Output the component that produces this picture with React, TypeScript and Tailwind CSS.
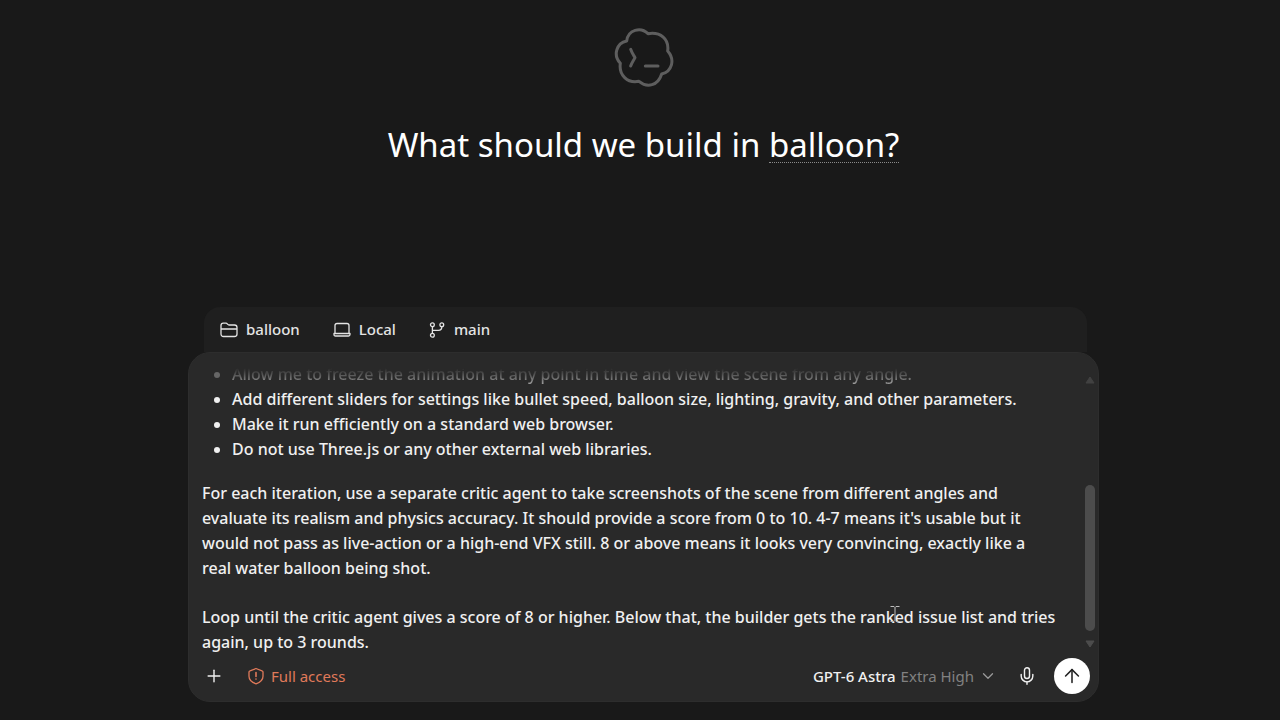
import { useState } from 'react';
import { ArrowUp, ChevronDown, Mic, Plus } from 'lucide-react';

const requirements = [
  'Add different sliders for settings like bullet speed, balloon size, lighting, gravity, and other parameters.',
  'Make it run efficiently on a standard web browser.',
  'Do not use Three.js or any other external web libraries.',
];

function Logo() {
  return (
    <svg
      viewBox="70 50 180 180"
      className="h-[60px] w-[60px] text-[#5e5e5e]"
      fill="none"
      stroke="currentColor"
      strokeWidth="9"
      strokeLinecap="round"
      strokeLinejoin="round"
      aria-hidden="true"
    >
      <path d="M108 92 C112 58 150 48 172 70 C210 64 236 86 231 122 C254 148 244 184 213 191 C202 226 170 234 145 213 C110 220 84 194 89 159 C66 134 78 98 108 92 Z" />
      <path d="M120 117 C124 129 130 136 133 142 C129 150 123 158 120 167" />
      <path d="M164 167 H202" />
    </svg>
  );
}

function IBeam() {
  return (
    <svg
      viewBox="0 0 10 18"
      className="pointer-events-none absolute left-[688px] top-0 h-[18px] w-[10px]"
      fill="none"
      stroke="#bdbdbd"
      aria-hidden="true"
    >
      <path d="M0.5 1.5 H4 L5 2.5 L6 1.5 H9.5 M5 2.5 V15.5 M0.5 16.5 H4 L5 15.5 L6 16.5 H9.5" />
    </svg>
  );
}

function ShieldAlert() {
  return (
    <svg
      viewBox="0 0 18 18"
      className="h-[18px] w-[18px]"
      fill="none"
      stroke="currentColor"
      strokeWidth="1.3"
      strokeLinecap="round"
      strokeLinejoin="round"
      aria-hidden="true"
    >
      <path d="M9 1.5 L15 3.8 C15.6 4 16 4.4 16 5 V9.2 C16 13 13 15.4 9 16.8 C5 15.4 2 13 2 9.2 V5 C2 4.4 2.4 4 3 3.8 Z" />
      <path d="M9 5.6 V9.4 M9 12 V12.1" strokeWidth="1.6" />
    </svg>
  );
}

function ContextBar() {
  return (
    <div className="ml-4 mr-3 flex h-[45px] items-center gap-[33px] rounded-t-2xl bg-[#1f1f1f] px-4 text-[15px] font-medium text-[#e4e4e4]">
      <button type="button" className="flex items-center gap-2">
        <svg
          viewBox="0 0 18 16"
          className="h-4 w-[18px]"
          fill="none"
          stroke="currentColor"
          strokeWidth="1.3"
          strokeLinejoin="round"
          aria-hidden="true"
        >
          <path d="M1 3.5 C1 2 1.8 1.2 3.2 1.2 H6 C7.4 1.2 7.6 3 9 3 H14.5 C16 3 17 4 17 5.4 V12 C17 13.6 16 14.5 14.5 14.5 H3.5 C2 14.5 1 13.6 1 12 Z M1 7 H17" />
        </svg>
        balloon
      </button>
      <button type="button" className="flex items-center gap-2">
        <svg
          viewBox="0 0 18 16"
          className="h-4 w-[18px]"
          fill="none"
          stroke="currentColor"
          strokeWidth="1.3"
          strokeLinejoin="round"
          strokeLinecap="round"
          aria-hidden="true"
        >
          <path d="M2 11.5 V3.6 C2 2.2 2.7 1.5 4.1 1.5 H13.9 C15.3 1.5 16 2.2 16 3.6 V11.5 M1 11.5 H17 V12.5 C17 13.5 16.5 14 15.5 14 H2.5 C1.5 14 1 13.5 1 12.5 Z" />
        </svg>
        Local
      </button>
      <button type="button" className="flex items-center gap-[9px]">
        <svg
          viewBox="0 0 16 16"
          className="h-4 w-4"
          fill="none"
          stroke="currentColor"
          strokeWidth="1.3"
          strokeLinecap="round"
          aria-hidden="true"
        >
          <circle cx="3.4" cy="2.8" r="1.9" />
          <circle cx="3.4" cy="13.2" r="1.9" />
          <circle cx="12.8" cy="2.8" r="1.9" />
          <path d="M3.4 4.7 V11.3 M12.8 4.7 C12.8 7.2 11.8 8.4 9.4 8.4 H3.4" />
        </svg>
        main
      </button>
    </div>
  );
}

function Scrollbar() {
  return (
    <div className="flex w-[10px] shrink-0 flex-col items-center text-[#4c4c4c]" aria-hidden="true">
      <svg viewBox="0 0 10 8" className="mt-[23px] h-2 w-[10px] opacity-70" fill="currentColor" stroke="currentColor" strokeLinejoin="round">
        <path d="M5 1 L9 7 H1 Z" />
      </svg>
      <div className="grow" />
      <div className="h-[146px] w-[10px] rounded-full bg-current" />
      <svg viewBox="0 0 10 8" className="mb-[7px] mt-[9px] h-2 w-[10px]" fill="currentColor" stroke="currentColor" strokeLinejoin="round">
        <path d="M5 7 L9 1 H1 Z" />
      </svg>
    </div>
  );
}

export default function App() {
  const [dictating, setDictating] = useState(false);

  return (
    <main className="flex min-h-screen flex-col items-center bg-[#191919] pl-[7px] pt-[27px] font-['Noto_Sans','Open_Sans',sans-serif] text-base text-[#f0f0f0]">
      <Logo />
      <h1 className="mt-[34px] text-[33px] leading-[48px] text-white">
        What should we build in{' '}
        <button type="button" className="border-b border-dotted border-[#8a8a8a] leading-[34px]">
          balloon?
        </button>
      </h1>

      <form className="mt-[138px] w-full max-w-[911px]" onSubmit={(e) => e.preventDefault()}>
        <ContextBar />

        <div className="rounded-[22px] border border-[#2d2d2d] bg-[#292929]">
          <div className="flex pr-[3px]">
            <div
              role="textbox"
              aria-multiline="true"
              aria-label="Prompt"
              contentEditable
              suppressContentEditableWarning
              className="mt-[9px] min-w-0 grow pl-[13px] pr-7 font-medium leading-[25px] outline-none"
            >
              <ul className="list-disc pl-[30px]">
                <li className="bg-gradient-to-b from-[#292929] from-25% to-[#b4b4b4] bg-clip-text text-transparent marker:text-[#666666]">
                  Allow me to freeze the animation at any point in time and view the scene from any angle.
                </li>
                {requirements.map((r) => (
                  <li key={r}>{r}</li>
                ))}
              </ul>
              <p className="mt-[19px]">
                For each iteration, use a separate critic agent to take screenshots of the scene from different angles and
                evaluate its realism and physics accuracy. It should provide a score from 0 to 10. 4-7 means it's usable but it
                would not pass as live-action or a high-end VFX still. 8 or above means it looks very convincing, exactly like a
                real water balloon being shot.
              </p>
              <p className="relative mt-[24px]">
                Loop until the critic agent gives a score of 8 or higher. Below that, the builder gets the ranked issue list
                and tries again, up to 3 rounds.
                <IBeam />
              </p>
            </div>
            <Scrollbar />
          </div>

          <div className="mt-[3px] flex items-center pb-[7px] pl-[15px] pr-2 text-[15px]">
            <button type="button" aria-label="Add files">
              <Plus size={20} strokeWidth={1.7} />
            </button>
            <button type="button" className="ml-[23px] flex items-center gap-[6px] text-[#e07a5a]">
              <ShieldAlert />
              Full access
            </button>
            <button type="button" className="ml-auto flex items-center gap-[5px]">
              <span className="font-medium">GPT-6 Astra</span>
              <span className="text-[#818181]">Extra High</span>
              <ChevronDown size={18} strokeWidth={1.7} className="text-[#9a9a9a]" />
            </button>
            <button
              type="button"
              aria-label="Dictate"
              aria-pressed={dictating}
              onClick={() => setDictating(!dictating)}
              className="ml-[20px]"
            >
              <Mic size={20} strokeWidth={1.7} />
            </button>
            <button
              type="submit"
              aria-label="Send"
              className="ml-[17px] flex h-[36px] w-[36px] items-center justify-center rounded-full bg-white text-[#222222]"
            >
              <ArrowUp size={22} strokeWidth={1.7} />
            </button>
          </div>
        </div>
      </form>
    </main>
  );
}
